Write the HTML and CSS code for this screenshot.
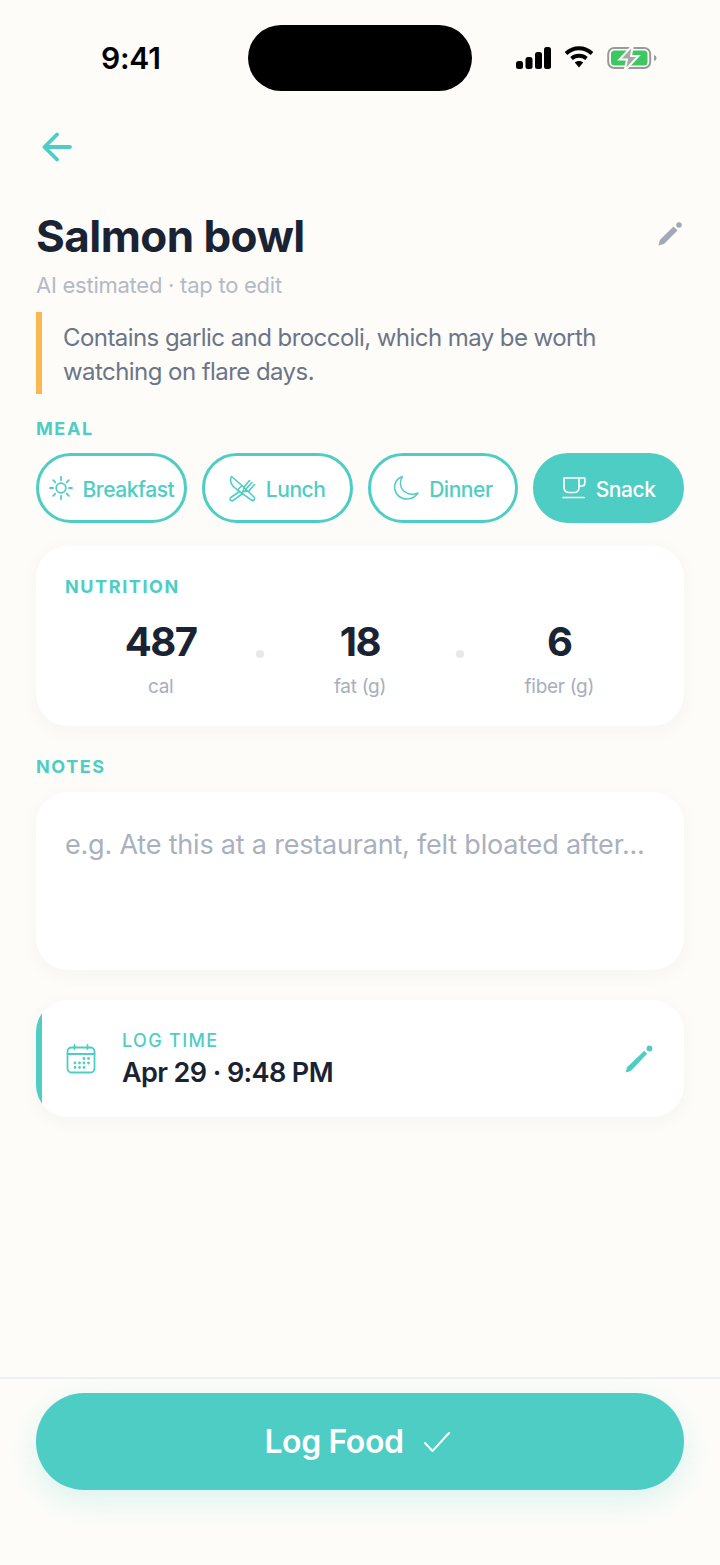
FILE: index.html
```html
<!DOCTYPE html>
<html lang="en">
<head>
  <meta charset="UTF-8">
  <meta name="viewport" content="width=device-width, initial-scale=1.0">
  <title>Salmon bowl</title>
  <link rel="stylesheet" href="styles.css">
</head>
<body>

<div class="status-bar">
  <div class="clock">9:41</div>
  <div class="island"></div>
  <div class="status-icons">
    <svg width="35" height="22" viewBox="0 0 35 22"><rect x="0" y="14" width="7" height="8" rx="2.5"/><rect x="9.500" y="10" width="7" height="12" rx="2.500"/><rect x="19" y="5" width="7" height="17" rx="2.500"/><rect x="28" y="0" width="7" height="22" rx="2.500"/></svg>
    <svg class="wifi" width="30" height="23" viewBox="0 0 30 23"><path d="M2 8.500C9.500 1.500 20.500 1.500 28 8.500" fill="none" stroke="#000" stroke-width="3.800"/><path d="M7.500 13.500C11.800 9.800 18.200 9.800 22.500 13.500" fill="none" stroke="#000" stroke-width="3.800"/><path d="M10.800 17.500L15 22.500L19.200 17.500C16.800 15.500 13.200 15.500 10.800 17.500Z"/></svg>
    <svg class="battery" width="50" height="26" viewBox="0 0 50 26">
      <rect x="1.200" y="3" width="42" height="20" rx="6" fill="none" stroke="#9a9a9a" stroke-width="2"/>
      <rect x="4" y="5.500" width="36.500" height="15" rx="3.500" fill="#3cc761"/>
      <path d="M47 10c1.500.5 2.500 1.500 2.500 3s-1 2.500-2.500 3z" fill="#9a9a9a"/>
      <path d="M26 0L12.500 14.500H20L17.500 26L31.500 11H24Z" fill="#a8a8a8" stroke="#fdfcf9" stroke-width="2"/>
    </svg>
  </div>
</div>

<div class="content">
  <svg class="back" width="32" height="32" viewBox="0 0 32 32"><path d="M28 15H2.500M15 2.500L2.500 15L15 27.500" fill="none" stroke="#4ecdc4" stroke-width="3.800" stroke-linecap="round" stroke-linejoin="round"/></svg>

  <div class="title-row">
    <h1>Salmon bowl</h1>
    <svg class="title-edit" width="24" height="24" viewBox="0 0 24 24" fill="#a3a9b8"><path d="M.5 23.500L1.800 18L15.500 4.500L19.500 8.500L6 22Z"/><circle cx="21" cy="3" r="2.800"/></svg>
  </div>
  <div class="subtitle">AI estimated · tap to edit</div>

  <div class="warning">Contains garlic and broccoli, which may be worth watching on flare days.</div>

  <div class="section-label">MEAL</div>
  <div class="meal-row">
    <div class="pill">
      <svg width="24" height="24" viewBox="0 0 24 24" fill="none" stroke="#4ecdc4" stroke-width="1.800" stroke-linecap="round"><circle cx="12" cy="12" r="4.800"/><path d="M12 1V4M12 20V23M1 12H4M20 12H23M4.200 4.200L6.300 6.300M17.700 17.700L19.800 19.800M4.200 19.800L6.300 17.700M17.700 6.300L19.800 4.200"/></svg>
      <span>Breakfast</span>
    </div>
    <div class="pill">
      <svg width="27" height="27" viewBox="0 0 27 27" fill="none" stroke="#4ecdc4" stroke-width="1.600" stroke-linecap="round" stroke-linejoin="round"><path d="M2.500 1.500C.5 5.500 2 9.500 5.500 12.500L8.500 15L13 10.500Z"/><path d="M13 10.500L25 22C25.900 22.900 25.900 24 25 24.900C24.100 25.800 23 25.800 22.100 24.900L8.500 15"/><path d="M10.500 16.500L1.800 22.500C.9 23.400 .9 24.500 1.800 25.300C2.700 26.100 3.700 26 4.600 25.100L13 19"/><path d="M14 16.500L15.500 11.500L20.500 5.500M17 14L23 7.500M17 14L16 16.500L20 16L25.500 9.500M14 16.500L13 19M14 16.500L16 16.500"/></svg>
      <span>Lunch</span>
    </div>
    <div class="pill">
      <svg width="26" height="26" viewBox="0 0 26 26" fill="none" stroke="#4ecdc4" stroke-width="1.500" stroke-linejoin="round"><path d="M9.500 1.500C2 4 -.5 12 3.500 18.500C8 25.500 19.500 26 25 18C17.500 21.500 8 17 7.500 9C7.300 6 8 3.500 9.500 1.500Z"/></svg>
      <span>Dinner</span>
    </div>
    <div class="pill active">
      <svg width="24" height="22" viewBox="0 0 24 22" fill="none" stroke="#fff" stroke-width="1.700" stroke-linecap="round" stroke-linejoin="round"><path d="M2 1H17V10.500C17 13.500 15 15.500 12.500 15.500H6.500C4 15.500 2 13.500 2 10.500Z"/><path d="M17 1H22.800V6C22.800 8 21.500 9 20 9H17"/><path d="M1 20.500H22"/></svg>
      <span>Snack</span>
    </div>
  </div>

  <div class="card nutrition">
    <div class="section-label">NUTRITION</div>
    <div class="stats">
      <div class="stat"><div class="stat-num">487</div><div class="stat-unit">cal</div></div>
      <div class="stat-dot"></div>
      <div class="stat"><div class="stat-num">18</div><div class="stat-unit">fat (g)</div></div>
      <div class="stat-dot"></div>
      <div class="stat"><div class="stat-num">6</div><div class="stat-unit">fiber (g)</div></div>
    </div>
  </div>

  <div class="section-label notes-label">NOTES</div>
  <div class="card notes">e.g. Ate this at a restaurant, felt bloated after...</div>

  <div class="card log-time">
    <div class="log-bar"></div>
    <svg width="30" height="30" viewBox="0 0 30 30" fill="none" stroke="#4ecdc4" stroke-width="1.800" stroke-linecap="round"><rect x="1.500" y="3.500" width="27" height="25" rx="4"/><path d="M1.500 10H28.500M8.500 1V5M21.500 1V5"/><path d="M18 14.500h.01M22.500 14.500h.01M9 19h.01M13.500 19h.01M18 19h.01M22.500 19h.01M9 23.500h.01M13.500 23.500h.01M18 23.500h.01" stroke-width="2.800"/></svg>
    <div class="log-text">
      <div class="log-label">LOG TIME</div>
      <div class="log-value">Apr 29 · 9:48 PM</div>
    </div>
    <svg class="log-edit" width="28" height="28" viewBox="0 0 24 24" fill="#4ecdc4"><path d="M.5 23.500L1.800 19L16.500 5L19 7.500L5 22.200Z"/><circle cx="21" cy="3" r="2.500"/></svg>
  </div>
</div>

<div class="footer">
  <button class="log-btn">
    <span>Log Food</span>
    <svg width="28" height="22" viewBox="0 0 28 22"><path d="M2 12L9.500 20L26 2" fill="none" stroke="#fff" stroke-width="2" stroke-linecap="round" stroke-linejoin="round"/></svg>
  </button>
</div>

</body>
</html>
```

FILE: styles.css
```css
* { box-sizing: border-box; }
html, body {
  height: 100%;
  margin: 0;
  padding: 0;
  background: #fdfcf9;
  color: #1a2333;
  font-family: Inter, sans-serif;
}
body {
  width: 720px;
  height: 1565px;
  display: flex;
  flex-direction: column;
  overflow: hidden;
}
svg { display: block; flex: none; }

/* status bar */
.status-bar {
  display: flex;
  align-items: center;
  height: 66px;
  margin-top: 25px;
  padding-left: 101px;
}
.clock {
  width: 147px;
  font-size: 30px;
  font-weight: 600;
  letter-spacing: -.2px;
  color: #000;
}
.island {
  width: 224px;
  height: 66px;
  background: #000;
  border-radius: 33px;
}
.status-icons {
  display: flex;
  align-items: center;
  gap: 13px;
  margin-left: 44px;
}
.wifi { margin-top: -3px; }

.content {
  flex: 1 1 auto;
  padding: 41px 36px 0;
}
.back { margin-left: 6px; }

.title-row {
  display: flex;
  justify-content: space-between;
  align-items: center;
  margin-top: 42px;
  padding-right: 2px;
}
h1 {
  margin: 0;
  font-size: 44px;
  line-height: 60px;
  font-weight: 700;
  letter-spacing: -.55px;
}
.title-edit { margin-top: -4px; }
.subtitle {
  margin-top: 4px;
  font-size: 22px;
  line-height: 30px;
  color: #b4b9c5;
  letter-spacing: -.25px;
}
.warning {
  margin-top: 12px;
  padding-left: 21px;
  border-left: 6px solid #fbb84f;
  height: 82px;
  font-size: 24px;
  line-height: 34px;
  padding-top: 9px;
  color: #6b7587;
  letter-spacing: -.56px;
}

.section-label {
  font-size: 18px;
  line-height: 24px;
  font-weight: 700;
  letter-spacing: 1.600px;
  color: #4ecdc4;
}
.content > .section-label { margin-top: 23px; }

.meal-row {
  display: flex;
  gap: 15px;
  margin-top: 12px;
}
.pill {
  flex: 1 1 0;
  height: 70px;
  display: flex;
  justify-content: center;
  align-items: center;
  gap: 10px;
  background: #fff;
  border: 3px solid #4ecdc4;
  border-radius: 35px;
  color: #4ecdc4;
  font-size: 21px;
  font-weight: 500;
  letter-spacing: -.45px;
}
.pill span { margin-top: 2px; }
.pill.active {
  background: #4ecdc4;
  color: #fff;
}

.card {
  background: #fff;
  border-radius: 32px;
  box-shadow: 0 4px 20px rgba(30, 40, 60, .04);
}
.nutrition {
  margin-top: 23px;
  height: 180px;
  padding: 29px 29px 0;
}
.stats {
  display: flex;
  align-items: center;
  margin-top: 16px;
}
.stat {
  flex: 1 1 0;
  text-align: center;
}
.stat-num {
  margin-top: -1px;
  font-size: 40px;
  line-height: 56px;
  font-weight: 700;
  letter-spacing: -1.500px;
}
.stat-unit {
  margin-top: 1px;
  font-size: 19px;
  line-height: 32px;
  color: #a8aeba;
  letter-spacing: -.3px;
}
.stat-dot {
  width: 8px;
  height: 8px;
  border-radius: 50%;
  background: #e6e8ec;
  margin-bottom: 10px;
}

.content > .notes-label { margin-top: 29px; }
.notes {
  margin-top: 13px;
  height: 178px;
  padding: 36px 29px 0;
  font-size: 27px;
  line-height: 34px;
  color: #aab0bd;
  letter-spacing: -.2px;
  white-space: nowrap;
}

.log-time {
  margin-top: 30px;
  height: 117px;
  display: flex;
  align-items: center;
  padding-right: 31px;
  overflow: hidden;
}
.log-bar {
  align-self: stretch;
  width: 6px;
  margin-right: 24px;
  background: #4ecdc4;
}
.log-text {
  margin-left: 26px;
  padding-top: 2px;
  flex: 1;
}
.log-label {
  font-size: 18px;
  line-height: 24px;
  letter-spacing: 1.350px;
  color: #4ecdc4;
  font-weight: 500;
}
.log-value {
  margin-top: 2px;
  font-size: 27px;
  line-height: 36px;
  font-weight: 600;
  letter-spacing: -.6px;
}

.footer {
  border-top: 2px solid #eef1f3;
  padding: 14px 36px 75px;
  background: #fdfcf9;
}
.log-btn {
  width: 100%;
  height: 97px;
  display: flex;
  justify-content: center;
  align-items: center;
  gap: 19px;
  padding: 0 5px 0 0;
  background: #4ecdc4;
  color: #fff;
  border: none;
  border-radius: 48px;
  font-family: Inter, sans-serif;
  font-size: 32px;
  font-weight: 600;
  letter-spacing: -.4px;
  box-shadow: 0 10px 30px rgba(78, 205, 196, .2);
}
```
